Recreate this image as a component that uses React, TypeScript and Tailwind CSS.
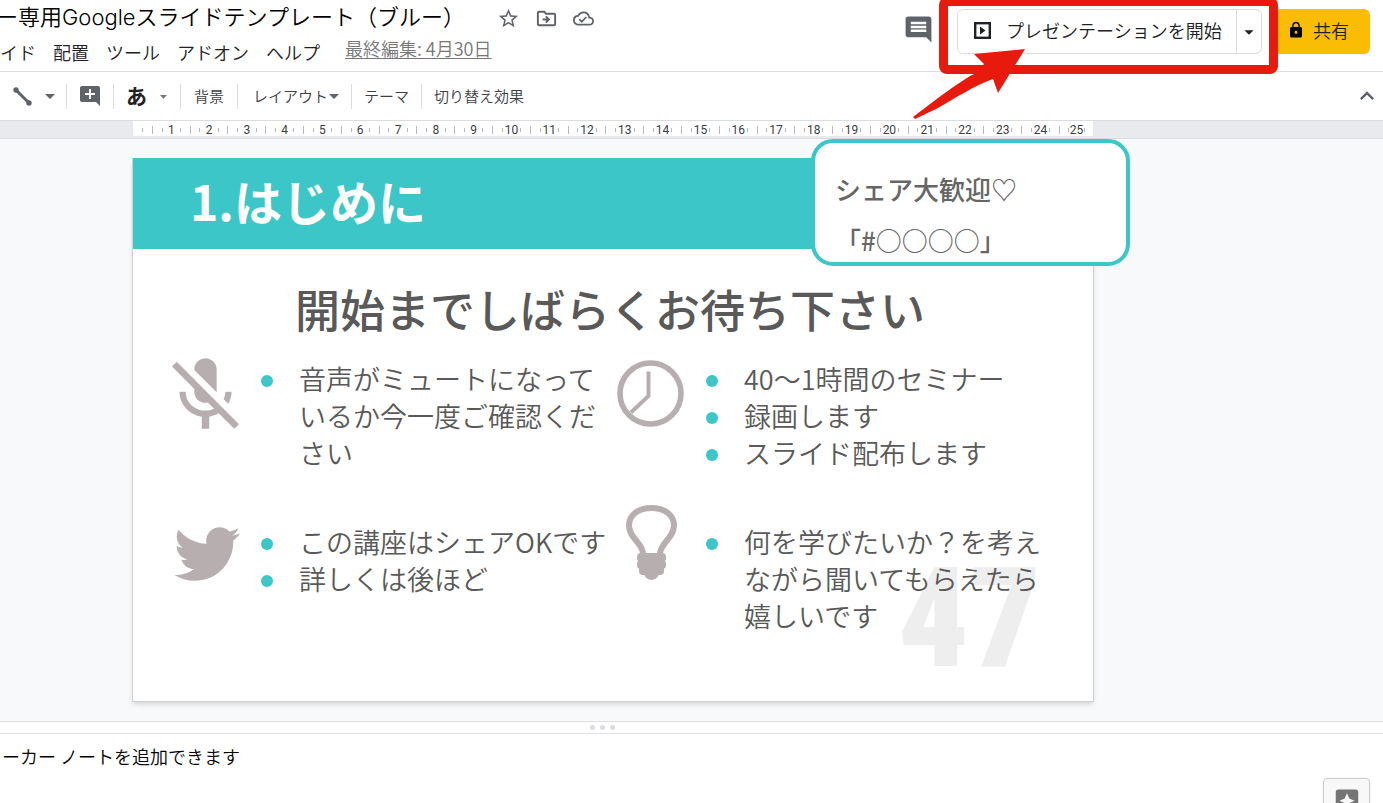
import type { ReactNode } from "react";
import { FaTwitter } from "react-icons/fa";
import {
    MdAddComment,
    MdArrowDropDown,
    MdAssistant,
    MdComment,
    MdKeyboardArrowUp,
    MdLock,
    MdOutlineCloudDone,
    MdOutlineDriveFileMove,
    MdStarBorder,
} from "react-icons/md";

interface Topic {
    icon: ReactNode;
    iconClass: string;
    listClass: string;
    lines: string[][];
}

const menus = ["イド", "配置", "ツール", "アドオン", "ヘルプ"];
const rulerMarks = Array.from({ length: 25 }, (_, i) => i + 1);

const topics: Topic[] = [
    {
        icon: <MicOffIcon />,
        iconClass: "h-[74px] items-center",
        listClass: "pt-1",
        lines: [["音声がミュートになって", "いるか今一度ご確認くだ", "さい"]],
    },
    {
        icon: <ClockIcon />,
        iconClass: "h-[74px] items-center",
        listClass: "pt-1",
        lines: [["40〜1時間のセミナー"], ["録画します"], ["スライド配布します"]],
    },
    {
        icon: <FaTwitter size={66} />,
        iconClass: "pt-4 pl-1",
        listClass: "pt-[18px]",
        lines: [["この講座はシェアOKです"], ["詳しくは後ほど"]],
    },
    {
        icon: <BulbIcon />,
        iconClass: "pl-1",
        listClass: "pt-[18px]",
        lines: [["何を学びたいか？を考え", "ながら聞いてもらえたら", "嬉しいです"]],
    },
];

function MicOffIcon() {
    return (
        <svg width="67" height="71" viewBox="3 2 18 19" fill="currentColor">
            <path d="M19 11h-1.7c0 .74-.16 1.43-.43 2.05l1.23 1.23c.56-.98.9-2.09.9-3.28zm-4.02.17c0-.06.02-.11.02-.17V5c0-1.66-1.34-3-3-3S9 3.34 9 5v.18l5.98 5.99zM4.27 3L3 4.27l6.01 6.01V11c0 1.66 1.33 3 2.99 3 .22 0 .44-.03.65-.08l1.66 1.66c-.71.33-1.5.52-2.31.52-2.76 0-5.3-2.1-5.3-5.1H5c0 3.41 2.72 6.23 6 6.72V21h2v-3.28c.91-.13 1.77-.45 2.54-.9L19.73 21 21 19.73 4.27 3z" />
        </svg>
    );
}

function ClockIcon() {
    return (
        <svg width="67" height="67" viewBox="0 0 67 67" fill="none" stroke="currentColor">
            <circle cx="33.5" cy="33.5" r="30.5" strokeWidth="5.6" />
            <path d="M31.5 11.5V36L14 52.5" strokeWidth="4" />
        </svg>
    );
}

function BulbIcon() {
    return (
        <svg width="52" height="75" viewBox="0 0 52 75">
            <path
                d="M17 49C17 38 3 33 3 20.500C3 9.500 13 3 25.500 3S48 9.500 48 20.500C48 33 34 38 34 49"
                fill="none"
                stroke="currentColor"
                strokeWidth="6"
            />
            <g fill="currentColor">
                <rect x="11" y="48" width="29" height="9" rx="4" />
                <rect x="11" y="55" width="29" height="9" rx="4" />
                <rect x="13" y="61" width="25" height="9" rx="4" />
                <path d="M13 52h25v13H13zM18 68h15c0 4-4 7-7.500 7S18 72 18 68z" />
            </g>
        </svg>
    );
}

function PresentIcon() {
    return (
        <svg width="23" height="23" viewBox="0 0 23 23" fill="currentColor">
            <rect x="4.2" y="4.2" width="14.600" height="14.600" fill="none" stroke="currentColor" strokeWidth="2.400" />
            <path d="M9 7.500v8l5.500-4z" />
        </svg>
    );
}

function Divider() {
    return <span className="h-[25px] w-px shrink-0 bg-[#dadce0]" />;
}

function Header() {
    return (
        <header className="relative flex h-[72px] shrink-0 justify-between border-b border-[#dadce0]">
            <div>
                <div className="flex h-9 items-center">
                    <h1 className="-ml-1 pb-0.5 font-[Inter,'Noto_Sans_CJK_JP',sans-serif] text-[22px] whitespace-nowrap text-black">
                        ー専用Googleスライドテンプレート（ブルー）
                    </h1>
                    <div className="ml-8 flex items-center gap-[15px] text-[#5f6368]">
                        <button aria-label="スター"><MdStarBorder size={23} /></button>
                        <button aria-label="移動"><MdOutlineDriveFileMove size={23} /></button>
                        <button aria-label="保存状況"><MdOutlineCloudDone size={21} /></button>
                    </div>
                </div>
                <nav className="flex h-[33px] items-center gap-[17px] text-[18px] whitespace-nowrap text-[#202124]">
                    {menus.map((menu) => (
                        <button key={menu}>{menu}</button>
                    ))}
                    <a href="#history" className="ml-2 pb-2 text-[18px] text-[#777] underline underline-offset-2">
                        最終編集: 4月30日
                    </a>
                </nav>
            </div>

            <div className="flex items-start pt-[9px] pr-[13px] text-[18px] whitespace-nowrap">
                <button aria-label="コメント" className="mt-[5px] mr-[23px] text-[#5f6368]">
                    <MdComment size={31} />
                </button>
                <div className="flex h-[45px] rounded-md border border-[#dadce0] text-[#202124]">
                    <button className="flex w-[278px] items-center gap-3 pb-[3px] pl-[13px]">
                        <PresentIcon />
                        プレゼンテーションを開始
                    </button>
                    <button aria-label="その他" className="flex w-[25px] items-center justify-center border-l border-[#dadce0]">
                        <MdArrowDropDown size={22} className="shrink-0" />
                    </button>
                </div>
                <button className="ml-2 flex h-[45px] w-[100px] items-center gap-2 rounded-md bg-[#fbbc04] pb-[3px] pl-[17px] text-[#202124]">
                    <MdLock size={18} className="text-black" />
                    共有
                </button>
            </div>

            <div className="absolute -top-[3px] right-[105px] h-[77px] w-[339px] rounded-lg border-[9px] border-[#e8190d]" />
            <svg className="absolute top-[48px] right-[357px]" width="113" height="72" viewBox="0 0 113 72" fill="#e8190d">
                <path d="M112 1L61 6L71 16C66 22 62 26 57 28C36 41 17 56 0 69L2 71L25 60C42 50 61 38 80 31L85 45Z" />
            </svg>
        </header>
    );
}

function Toolbar() {
    return (
        <div className="flex h-[49px] shrink-0 items-center border-b border-[#dadce0] text-[15px] whitespace-nowrap text-[#3c4043]">
            <button aria-label="線" className="ml-3 flex items-center text-[#5f6368]">
                <svg width="20" height="20" viewBox="0 0 20 20" fill="currentColor">
                    <path d="M4 4L17 17" stroke="currentColor" strokeWidth="3" />
                    <circle cx="4" cy="4" r="2.700" />
                    <circle cx="17" cy="17" r="2.700" />
                </svg>
                <MdArrowDropDown size={24} className="ml-1.5" />
            </button>
            <span className="w-1" />
            <Divider />
            <button aria-label="コメントを追加" className="mx-[11px] text-[#5f6368]"><MdAddComment size={24} /></button>
            <Divider />
            <button className="mr-2 ml-3 flex items-center text-[21px] font-bold text-[#202124]">
                あ
                <MdArrowDropDown size={17} className="ml-2 text-[#777]" />
            </button>
            <Divider />
            <button className="mx-[13px]">背景</button>
            <Divider />
            <button className="ml-[15px] flex items-center">
                レイアウト
                <MdArrowDropDown size={24} className="-mx-1.5 text-[#5f6368]" />
            </button>
            <span className="w-[11px]" />
            <Divider />
            <button className="mx-3">テーマ</button>
            <Divider />
            <button className="mx-3">切り替え効果</button>
            <button aria-label="メニューを隠す" className="mr-0.5 ml-auto text-[#5f6368]"><MdKeyboardArrowUp size={28} /></button>
        </div>
    );
}

function Ruler() {
    return (
        <div className="h-[18px] shrink-0 border-b border-[#dadce0] bg-[#e8eaed] pr-[290px] pb-0.5 pl-[133px]">
            <div className="grid h-full grid-cols-[0.5fr_repeat(24,1fr)_0.9fr] bg-white font-[Roboto,sans-serif] text-[12px] font-normal text-[#3c4043]">
                <div className="flex items-center justify-between">
                    <span />
                    <span className="h-1 w-px bg-[#b5b8bc]" />
                    <span />
                </div>
                {rulerMarks.map((mark) => (
                    <div key={mark} className="flex items-center justify-between">
                        <span className="h-2 w-px bg-[#b5b8bc]" />
                        <span className="h-1 w-px bg-[#b5b8bc]" />
                        <span className="flex w-0 justify-center">{mark}</span>
                        <span className="h-1 w-px bg-[#b5b8bc]" />
                        <span />
                    </div>
                ))}
            </div>
        </div>
    );
}

function Slide() {
    return (
        <section className="relative isolate min-h-[544px] border border-[#d0d1d3] bg-white text-[#595959] shadow-md">
            <div className="-mt-px flex h-[91px] items-center bg-[#3dc6c7] pb-2 pl-[57px]">
                <h2 className="text-[48px] font-bold text-white">1.はじめに</h2>
            </div>
            <div className="absolute -top-[20px] -right-[37px] h-[127px] w-[319px] rounded-[22px] border-4 border-[#3dc6c7] bg-white pt-5 pl-5 text-[26px] leading-[51px] font-medium text-[#666]">
                <p>シェア大歓迎♡</p>
                <p>「#○○○○」</p>
            </div>

            <p className="mt-7 pl-[162px] text-[45px] leading-[64px] font-medium whitespace-nowrap">開始までしばらくお待ち下さい</p>

            <div className="mt-[15px] grid grid-cols-[445px_1fr] gap-y-[34px] pl-[37px]">
                {topics.map((topic) => (
                    <div key={topic.lines[0][0]} className="flex items-start">
                        <div className={`flex w-[70px] shrink-0 justify-center text-[#b7afaf] ${topic.iconClass}`}>{topic.icon}</div>
                        <ul className={`ml-[21px] text-[27px] leading-[37px] whitespace-nowrap ${topic.listClass}`}>
                            {topic.lines.map((lines) => (
                                <li key={lines[0]} className="flex gap-[26px]">
                                    <span className="mt-[15px] h-3 w-3 shrink-0 rounded-full bg-[#3dc6c7]" />
                                    <div>
                                        {lines.map((line) => (
                                            <p key={line}>{line}</p>
                                        ))}
                                    </div>
                                </li>
                            ))}
                        </ul>
                    </div>
                ))}
            </div>

            <span className="absolute right-[52px] bottom-[13px] -z-10 font-['Roboto_Condensed',Roboto,sans-serif] text-[140px] leading-[140px] font-black text-[#eee]">
                47
            </span>
        </section>
    );
}

export default function App() {
    return (
        <div className="flex h-screen flex-col overflow-hidden bg-white font-['Noto_Sans_CJK_JP',sans-serif] font-[350]">
            <Header />
            <Toolbar />
            <Ruler />
            <main className="shrink-0 bg-[#f8f9fb] pt-[19px] pr-[289px] pb-[19px] pl-[132px]">
                <Slide />
            </main>
            <div className="flex h-[13px] shrink-0 items-center justify-center gap-[5px] border-y border-[#e0e0e0] pr-[178px]">
                <span className="h-[5px] w-[5px] rounded-full bg-[#dadce0]" />
                <span className="h-[5px] w-[5px] rounded-full bg-[#dadce0]" />
                <span className="h-[5px] w-[5px] rounded-full bg-[#dadce0]" />
            </div>
            <footer className="flex min-h-0 flex-1 justify-between pr-[13px] text-[18px]">
                <p className="pt-[9px] pl-0.5 text-black">ーカー ノートを追加できます</p>
                <button
                    aria-label="データ探索"
                    className="mt-11 flex h-[47px] w-[47px] items-center justify-center rounded border border-[#ccc] bg-[#f8f8f8] text-[#757575] shadow-sm"
                >
                    <MdAssistant size={30} />
                </button>
            </footer>
        </div>
    );
}
